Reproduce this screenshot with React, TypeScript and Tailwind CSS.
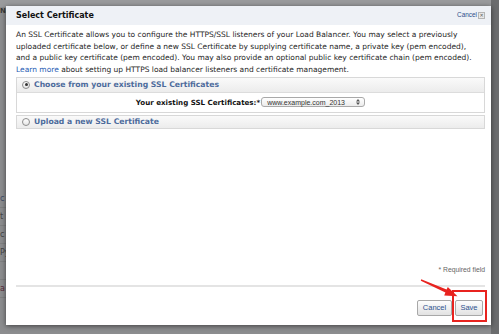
import React from "react";

function Radio({ checked }: { checked?: boolean }) {
  return (
    <span className="flex h-[8px] w-[8px] shrink-0 items-center justify-center rounded-full border border-[#8d8d8d] bg-gradient-to-b from-white to-[#e6e6e6]">
      {checked ? <span className="h-[3px] w-[3px] rounded-full bg-[#333]" /> : null}
    </span>
  );
}

function BgRow({ text, color }: { text: string; color?: string }) {
  return (
    <div className="flex h-[18px] items-center border-b border-[#7f8082] text-[8px] leading-none">
      <span className={color ?? "text-[#3d4a66]"}>{text}</span>
    </div>
  );
}

export default function App() {
  return (
    <div className="relative h-[334px] w-[499px] overflow-hidden bg-[#8c8d8f] font-['DejaVu_Sans',sans-serif]">
      {/* background page behind the overlay */}
      <div className="flex h-full">
        <div className="flex flex-1 flex-col">
          <div className="h-[7px] bg-[#9a9b9d]" />
          <div className="flex h-[8px] items-center text-[7px] font-bold text-[#3a3a3a]">Na</div>
          <div className="h-[175px]" />
          <BgRow text="c" />
          <BgRow text="t" color="text-[#444]" />
          <BgRow text="c" color="text-[#444]" />
          <BgRow text="Py" color="text-[#444]" />
          <BgRow text="" />
          <BgRow text="a" color="text-[#5a2a3a]" />
        </div>
        <div className="w-[8px] bg-[#6b6c6e]" />
      </div>

      {/* modal */}
      <div className="absolute left-[6px] top-[6px] flex h-[319px] w-[485px] flex-col bg-white shadow-[0_1px_5px_rgba(0,0,0,0.55)]">
        <div className="flex h-[19px] shrink-0 items-center justify-between bg-[#eef1f6] pl-[10px] pr-[6px]">
          <span className="text-[8px] font-bold leading-none text-[#111]">Select Certificate</span>
          <span className="flex items-center gap-[1px]">
            <span className="font-['Liberation_Sans',sans-serif] text-[6.4px] leading-none text-[#2c4f8c]">Cancel</span>
            <span className="flex h-[7px] w-[7px] items-center justify-center border border-[#b5b5b5] bg-[#e9e9e9] text-[5px] leading-none text-[#555]">✕</span>
          </span>
        </div>

        <div className="flex flex-col pl-[10px] pr-[6px] pt-[4px]">
          <div className="flex flex-col whitespace-nowrap text-[7.5px] leading-[11.7px] text-[#1e1e1e]">
            <span>An SSL Certificate allows you to configure the HTTPS/SSL listeners of your Load Balancer. You may select a previously</span>
            <span>uploaded certificate below, or define a new SSL Certificate by supplying certificate name, a private key (pem encoded),</span>
            <span>and a public key certificate (pem encoded). You may also provide an optional public key certificate chain (pem encoded).</span>
            <span>
              <span className="text-[#1f5cb4]">Learn more</span> about setting up HTTPS load balancer listeners and certificate management.
            </span>
          </div>

          <div className="mt-[1px] flex flex-col border border-[#d8d8d8]">
            <div className="flex h-[15px] items-center gap-[4px] border-b border-[#dcdcdc] bg-gradient-to-b from-[#fafafa] to-[#ececec] pl-[5px]">
              <Radio checked />
              <span className="text-[7.7px] font-bold leading-none text-[#4d6b9c]">Choose from your existing SSL Certificates</span>
            </div>
            <div className="flex h-[19px] items-center justify-center gap-[1px]">
              <span className="text-[7.1px] font-bold leading-none text-[#111]">Your existing SSL Certificates:*</span>
              <span className="flex h-[10px] w-[104px] items-center justify-between rounded-[3px] border border-[#a9a9a9] bg-gradient-to-b from-white to-[#ececec] pl-[5px] pr-[4px] font-['Liberation_Sans',sans-serif] text-[7px] leading-none text-[#333]">
                www.example.com_2013
                <svg width="4" height="6" viewBox="0 0 4 6">
                  <path d="M0 2.4 L2 0 L4 2.4 Z M0 3.6 L2 6 L4 3.6 Z" fill="#555" />
                </svg>
              </span>
            </div>
          </div>

          <div className="mt-[2px] flex h-[14px] items-center gap-[4px] border border-[#d8d8d8] bg-gradient-to-b from-[#fafafa] to-[#ececec] pl-[5px]">
            <Radio />
            <span className="text-[7.7px] font-bold leading-none text-[#4d6b9c]">Upload a new SSL Certificate</span>
          </div>
        </div>

        <div className="flex-1" />

        <div className="flex h-[10px] shrink-0 items-center justify-end pr-[6px] font-['Liberation_Sans',sans-serif] text-[6.8px] leading-none text-[#666]">
          * Required field
        </div>
        <div className="mt-[10px] ml-[10px] mr-[6px] h-[2px] shrink-0 bg-[#e4e4e4]" />
        <div className="flex shrink-0 justify-end gap-[3px] pb-[9px] pr-[8px] pt-[13px]">
          <button className="flex h-[16px] w-[35px] items-center justify-center rounded-[2px] border border-[#a8a8a8] bg-gradient-to-b from-[#fdfdfd] to-[#e2e2e2] font-['Liberation_Sans',sans-serif] text-[7.5px] leading-none text-[#2d5290]">
            Cancel
          </button>
          <button className="flex h-[16px] w-[28px] items-center justify-center rounded-[2px] border border-[#a8a8a8] bg-gradient-to-b from-[#fdfdfd] to-[#e2e2e2] font-['Liberation_Sans',sans-serif] text-[7.5px] leading-none text-[#2d5290]">
            Save
          </button>
        </div>
      </div>

      {/* annotation */}
      <div className="absolute left-[452px] top-[290px] h-[32px] w-[35px] border-2 border-[#e8231f]" />
      <svg className="absolute left-0 top-0" width="499" height="334" viewBox="0 0 499 334">
        <path
          d="M421.2 279.3 L446.6 289.6 L447.8 287 L457.5 296.3 L444.2 295.4 L445.4 292.6 L420.8 280.7 Z"
          fill="#e8231f"
        />
      </svg>
    </div>
  );
}
